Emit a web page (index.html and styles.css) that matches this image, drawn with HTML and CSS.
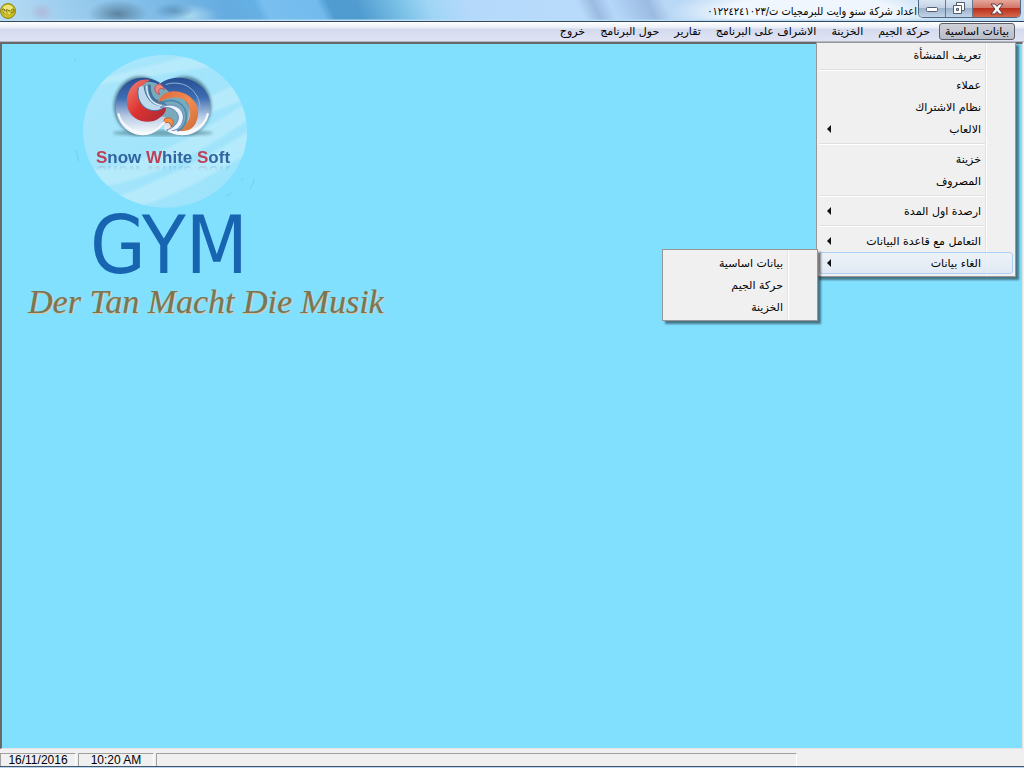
FILE: index.html
```html
<!DOCTYPE html>
<html lang="ar" dir="rtl">
<head>
    <meta charset="UTF-8">
    <meta name="viewport" content="width=device-width, initial-scale=1.0">
    <title>Snow White Soft GYM</title>
    <link rel="stylesheet" href="styles.css">
</head>
<body>

    <header class="title-bar">
        <div class="window-controls" dir="ltr">
            <button class="control" type="button" aria-label="Minimize">
                <svg width="14" height="8" viewBox="0 0 14 8"><rect x="1.5" y="2.5" width="11" height="4" rx="1" fill="#fff" stroke="#545d6b"/></svg>
            </button>
            <button class="control" type="button" aria-label="Restore">
                <svg width="13" height="13" viewBox="0 0 13 13" fill="#fff" stroke="#545d6b"><path d="M3.500 .5h8v8h-8z"/><path d="M.5 3.500h8v8h-8z"/><path d="M3.500 6.500h2v2h-2z" fill="#a6bbd3"/></svg>
            </button>
            <button class="control close" type="button" aria-label="Close">
                <svg width="14" height="12" viewBox="0 0 14 12"><path d="M1 1h4l2 2.500L9 1h4L9 6l4 5H9L7 8.500 5 11H1l4-5z" fill="#fff" stroke="#5b3940"/></svg>
            </button>
        </div>
        <h1 class="window-title">اعداد شركة سنو وايت للبرمجيات ت/٠١٢٢٤٢٤١٠٢٣</h1>
        <svg class="app-icon" width="16" height="16" viewBox="0 0 16 16">
            <circle cx="8" cy="8" r="7.500" fill="#c9bd27" stroke="#8d861c"/>
            <ellipse cx="8" cy="5" rx="5" ry="3" fill="#eee77a"/>
            <path d="M2 7q2-2 3 0t-2 3M6 9q0-4 2-2t2 0M11 7q2-2 3 0t-3 3" fill="none" stroke="#7a731c"/>
            <path d="M4 9h2M8 10h2" stroke="#fffbd0"/>
        </svg>
    </header>

    <nav class="menu-bar">
        <div class="menu">
            <button class="menu-title open" type="button">بيانات اساسية</button>
            <div class="popup main-popup">
                <button class="item" type="button">تعريف المنشأة</button>
                <hr>
                <button class="item" type="button">عملاء</button>
                <button class="item" type="button">نظام الاشتراك</button>
                <button class="item has-sub" type="button">الالعاب</button>
                <hr>
                <button class="item" type="button">خزينة</button>
                <button class="item" type="button">المصروف</button>
                <hr>
                <button class="item has-sub" type="button">ارصدة اول المدة</button>
                <hr>
                <button class="item has-sub" type="button">التعامل مع قاعدة البيانات</button>
                <div class="sub">
                    <button class="item has-sub selected" type="button">الغاء بيانات</button>
                    <div class="popup sub-popup">
                        <button class="item" type="button">بيانات اساسية</button>
                        <button class="item" type="button">حركة الجيم</button>
                        <button class="item" type="button">الخزينة</button>
                    </div>
                </div>
            </div>
        </div>
        <button class="menu-title" type="button">حركة الجيم</button>
        <button class="menu-title" type="button">الخزينة</button>
        <button class="menu-title" type="button">الاشراف على البرنامج</button>
        <button class="menu-title" type="button">تقارير</button>
        <button class="menu-title" type="button">حول البرنامج</button>
        <button class="menu-title" type="button">خروج</button>
    </nav>

    <main class="workspace" dir="ltr">
        <div class="brand" lang="en">
            <div class="logo">
                <svg width="190" height="160" viewBox="0 0 570 480">
                    <defs>
                        <linearGradient id="disc" x1="0" y1="0" x2="1" y2="1">
                            <stop offset="0" stop-color="#a9e6fb"/>
                            <stop offset="1" stop-color="#9be3fb"/>
                        </linearGradient>
                        <linearGradient id="ring" x1="0" y1="0" x2="0" y2="1">
                            <stop offset="0" stop-color="#284e93"/>
                            <stop offset=".35" stop-color="#3e6db1"/>
                            <stop offset=".68" stop-color="#b9cce5"/>
                            <stop offset="1" stop-color="#fff"/>
                        </linearGradient>
                        <linearGradient id="red" x1="0" y1="0" x2="1" y2="1">
                            <stop offset="0" stop-color="#f28478"/>
                            <stop offset=".5" stop-color="#dc3330"/>
                            <stop offset="1" stop-color="#a92735"/>
                        </linearGradient>
                        <linearGradient id="orange" x1="0" y1="0" x2="1" y2="1">
                            <stop offset="0" stop-color="#dc6840"/>
                            <stop offset=".5" stop-color="#f58b4d"/>
                            <stop offset="1" stop-color="#c96d3c"/>
                        </linearGradient>
                        <filter id="soft"><feGaussianBlur stdDeviation="5"/></filter>
                        <clipPath id="disc-clip"><ellipse cx="285" cy="244" rx="246" ry="229"/></clipPath>
                    </defs>
                    <ellipse cx="285" cy="244" rx="246" ry="229" fill="url(#disc)"/>
                    <g clip-path="url(#disc-clip)" fill="#c4effc" filter="url(#soft)" opacity=".6">
                        <path d="M70 90L390 10 450 45 60 108z"/>
                        <path d="M410 145L520 92 540 140 420 190z"/>
                        <path d="M60 360C220 350 400 245 540 150V205C390 310 240 390 95 410z"/>
                        <path d="M130 445C300 380 430 310 550 235V300C420 380 300 450 180 475z"/>
                    </g>
                    <ellipse cx="278" cy="249" rx="150" ry="10" fill="#477482" opacity=".55" filter="url(#soft)"/>
                    <g fill="#315269" opacity=".65" filter="url(#soft)">
                        <ellipse cx="210" cy="167" rx="79" ry="88"/>
                        <ellipse cx="345" cy="167" rx="79" ry="88"/>
                    </g>
                    <!-- outer rings -->
                    <path d="M270 98C207 60 137 98 137 169C137 240 211 281 265 239L286 214 284 161 246 128z" fill="url(#ring)"/>
                    <path d="M265 105C318 58 419 91 421 166C423 240 351 280 284 240L270 170 250 120z" fill="url(#ring)"/>
                    <!-- glass centre behind the swirls -->
                    <path d="M228 96C250 92 275 105 300 128C350 130 372 180 345 235C325 250 305 240 285 200C240 205 195 160 203 112z" fill="#78aabb"/>
                    <!-- left swirls -->
                    <path d="M240 90C196 80 164 124 172 168C180 214 237 228 268 204C287 190 291 180 286 166C257 192 219 182 208 150C202 126 216 101 240 90z" fill="url(#red)"/>
                    <path d="M206 112C196 148 220 184 258 182C274 180 284 172 288 162C258 176 226 152 222 106" fill="#bcd9ee" stroke="#466c9b" stroke-width="3"/>
                    <path d="M238 104C238 140 252 160 284 158" fill="none" stroke="#3f6f9c" stroke-width="8"/>
                    <path d="M230 108C230 140 246 164 276 167" fill="none" stroke="#d9ecfb" stroke-width="4"/>
                    <path d="M265 103C251 107 250 127 269 134C260 120 270 110 283 119C280 108 272 102 265 103z" fill="#ef877e" stroke="#ce4c50" stroke-width="3"/>
                    <!-- right swirls -->
                    <path d="M264 158C272 128 305 118 332 127C374 138 398 180 377 220C368 238 352 245 325 243C358 224 370 188 353 160C336 135 296 140 264 158z" fill="url(#orange)"/>
                    <path d="M272 160C308 138 350 160 349 202C347 222 337 238 322 243" fill="none" stroke="#4c8ab0" stroke-width="5"/>
                    <path d="M270 172C308 154 343 174 340 206C336 234 314 248 290 240C318 232 332 208 322 190C312 174 292 170 270 172z" fill="#edf3ff" stroke="#6687b7" stroke-width="3"/>
                    <path d="M284 206C304 198 319 214 303 232C306 218 297 214 280 220z" fill="#f49343" stroke="#cd6234" stroke-width="3"/>
                    <path d="M287 104C306 96 337 98 356 111C381 128 390 154 390 174" fill="none" stroke="#86b8dc" stroke-width="3"/>
                    <path d="M145 190C155 238 222 270 265 235L284 216M295 241C340 263 402 243 414 190" fill="none" stroke="#f7faff" stroke-width="6"/>
                    <g fill="none" stroke="#65c5eb" stroke-width="2">
                        <path d="M16 27v8M18 300q5 15 7 34M467 439q10-5 18-12M514 390l7-6M541 418q9-16 11-32"/>
                    </g>
                </svg>
                <p class="company"><b>S</b>now <b>W</b>hite <b>S</b>oft</p>
            </div>
            <h2 class="product">GYM</h2>
            <p class="slogan" lang="de">Der Tan Macht Die Musik</p>
        </div>
    </main>

    <footer class="status-bar" dir="ltr">
        <div class="panel">16/11/2016</div>
        <div class="panel">10:20 AM</div>
        <div class="panel message"></div>
    </footer>
    <div class="window-edge"></div>

</body>
</html>
```

FILE: styles.css
```css
* {
    box-sizing: border-box;
}
body {
    margin: 0;
    height: 100vh;
    display: flex;
    flex-direction: column;
    overflow: hidden;
    background: #f0f0f0;
    color: #000;
    font-family: "DejaVu Sans", sans-serif;
    font-size: 11px;
}
button {
    font: inherit;
    color: inherit;
    border: none;
    background: none;
    padding: 0;
}

/* title bar */
.title-bar {
    height: 22px;
    flex: none;
    display: flex;
    align-items: center;
    padding: 0 3px 0 0;
    border-bottom: 1px solid #34475e;
    background:
        linear-gradient(to bottom, transparent 19px, #b9ddf5 20px),
        radial-gradient(ellipse 30px 14px at 118px 14px, #51748fcc, transparent),
        radial-gradient(ellipse 20px 8px at 174px 11px, #477da699, transparent),
        radial-gradient(ellipse 28px 12px at 190px 16px, #a9d8ef, transparent),
        radial-gradient(ellipse 12px 10px at 42px 12px, #b0b9dc, transparent),
        radial-gradient(ellipse 140px 26px at 810px 12px, #eff6fd 60%, transparent),
        linear-gradient(65deg, #b9dcf4 0, #9bcdee 70px, #66ace0 210px, #64b0e4 238px, #79bff0 246px, #73bbed 295px, #509bd0 305px, #509bd0 330px, #7dc3e8 370px, #a0d5f5 395px, #b4d9fb 430px, #b9dbfb 530px, #9bbbe0 545px, #b5d8fa 560px, #9bbbe0 595px, #b9d8f6 610px, #c8def4 930px);
}
.window-controls {
    display: flex;
    align-self: flex-start;
    height: 18px;
    border: 1px solid #53677f;
    border-top: none;
    border-radius: 0 0 5px 5px;
    overflow: hidden;
}
.control {
    width: 27px;
    display: flex;
    justify-content: center;
    align-items: center;
    border-right: 1px solid #65798f;
    background: linear-gradient(#d9e5f2 0, #c3d3e5 45%, #9db3cc 50%, #c1d5e9);
}
.control.close {
    width: 47px;
    border-right: none;
    background: linear-gradient(#e5a699 0, #d27868 45%, #b9301d 50%, #d66848);
}
.window-title {
    margin: 0;
    padding: 1px 1px 0 0;
    flex: 1;
    font-family: "DejaVu Sans Condensed", "DejaVu Sans", sans-serif;
    font-size: 11px;
    font-weight: normal;
    white-space: nowrap;
}
.app-icon {
    flex: none;
    align-self: flex-end;
    margin-bottom: 2px;
}

/* menu bar */
.menu-bar {
    height: 20px;
    flex: none;
    display: flex;
    gap: 3px;
    padding: 1px 9px 0 0;
    background: linear-gradient(#fff 0, #e9edf7 6px, #d4daed 7px, #dfe3f4 18px);
    border-bottom: 1px solid #b4b7c3;
}
.menu {
    position: relative;
}
.menu-title {
    height: 17px;
    padding: 0 5px;
    border: 1px solid transparent;
    white-space: nowrap;
    line-height: 15px;
}
.menu-title.open {
    border-color: #5b606a;
    border-radius: 3px;
    background: linear-gradient(#cfd1d8, #b9bdca);
}
.popup {
    position: absolute;
    z-index: 2;
    padding: 2px;
    border: 1px solid #979797;
    background: linear-gradient(to left, #f0f0f0 28px, #fff 28px, #fff 29px, #e2e3e3 29px, #e2e3e3 30px, #f0f0f0 30px);
    box-shadow: 3px 3px 2px #0007;
}
.main-popup {
    top: 19px;
    right: -1px;
    width: 200px;
    padding-top: 1px;
}
.item {
    display: block;
    position: relative;
    width: 100%;
    height: 22px;
    padding: 0 31px 0 0;
    text-align: right;
    white-space: nowrap;
    border: 1px solid transparent;
    border-radius: 3px;
}
.item.has-sub::before {
    content: "";
    position: absolute;
    left: 7px;
    top: 6px;
    border: 4px solid transparent;
    border-right-color: #111;
    border-left: none;
}
.item.selected {
    border-color: #aecff7;
    background: linear-gradient(#edf2f8cc, #dce8f6cc);
}
.popup hr {
    height: 2px;
    margin: 3px 28px 3px 0;
    border: none;
    border-top: 1px solid #e0e0e0;
    border-bottom: 1px solid #fff;
}
.sub {
    position: relative;
}
.sub-popup {
    top: -3px;
    right: 195px;
    width: 156px;
}

/* workspace */
.workspace {
    flex: 1;
    min-height: 0;
    margin-right: 1px;
    border: 2px solid #696969;
    border-right: 1px solid #e3e3e3;
    border-bottom: 1px solid #e3e3e3;
    background: #82e0ff;
}
.brand {
    display: flex;
    flex-direction: column;
    align-items: flex-start;
    padding: 6px 0 0 26px;
}
.logo {
    position: relative;
    height: 160px;
    margin-left: 42px;
}
.company {
    position: absolute;
    left: 0;
    right: 4px;
    top: 98px;
    margin: 0;
    color: #32649f;
    text-align: center;
    font: bold 17px/20px "Liberation Sans", sans-serif;
    -webkit-box-reflect: below -7px linear-gradient(transparent 50%, #0005);
}
.company b {
    color: #bd4057;
}
.product {
    margin: 0 0 0 62px;
    color: #1764b1;
    font: 80px/72px "DejaVu Sans Condensed", "DejaVu Sans", sans-serif;
}
.slogan {
    margin: 0;
    color: #7c7454;
    font: italic 34px/40px "Edwardian Script ITC", "Liberation Serif", serif;
    text-shadow: 1px 1px 0 #d7c49b;
    white-space: nowrap;
}

/* status bar */
.status-bar {
    height: 17px;
    flex: none;
    display: flex;
    gap: 2px;
    padding-top: 4px;
    background: #f0f0f0;
    font: 12px/13px "Liberation Sans", sans-serif;
}
.panel {
    width: 76px;
    text-align: center;
    border: 1px solid #a0a0a0;
    border-right-color: #fff;
    border-bottom: none;
}
.panel.message {
    flex: 1;
    margin-right: 227px;
}
.window-edge {
    height: 2px;
    flex: none;
    border-top: 1px solid #42566d;
    background: #b9d4ec;
}
```
